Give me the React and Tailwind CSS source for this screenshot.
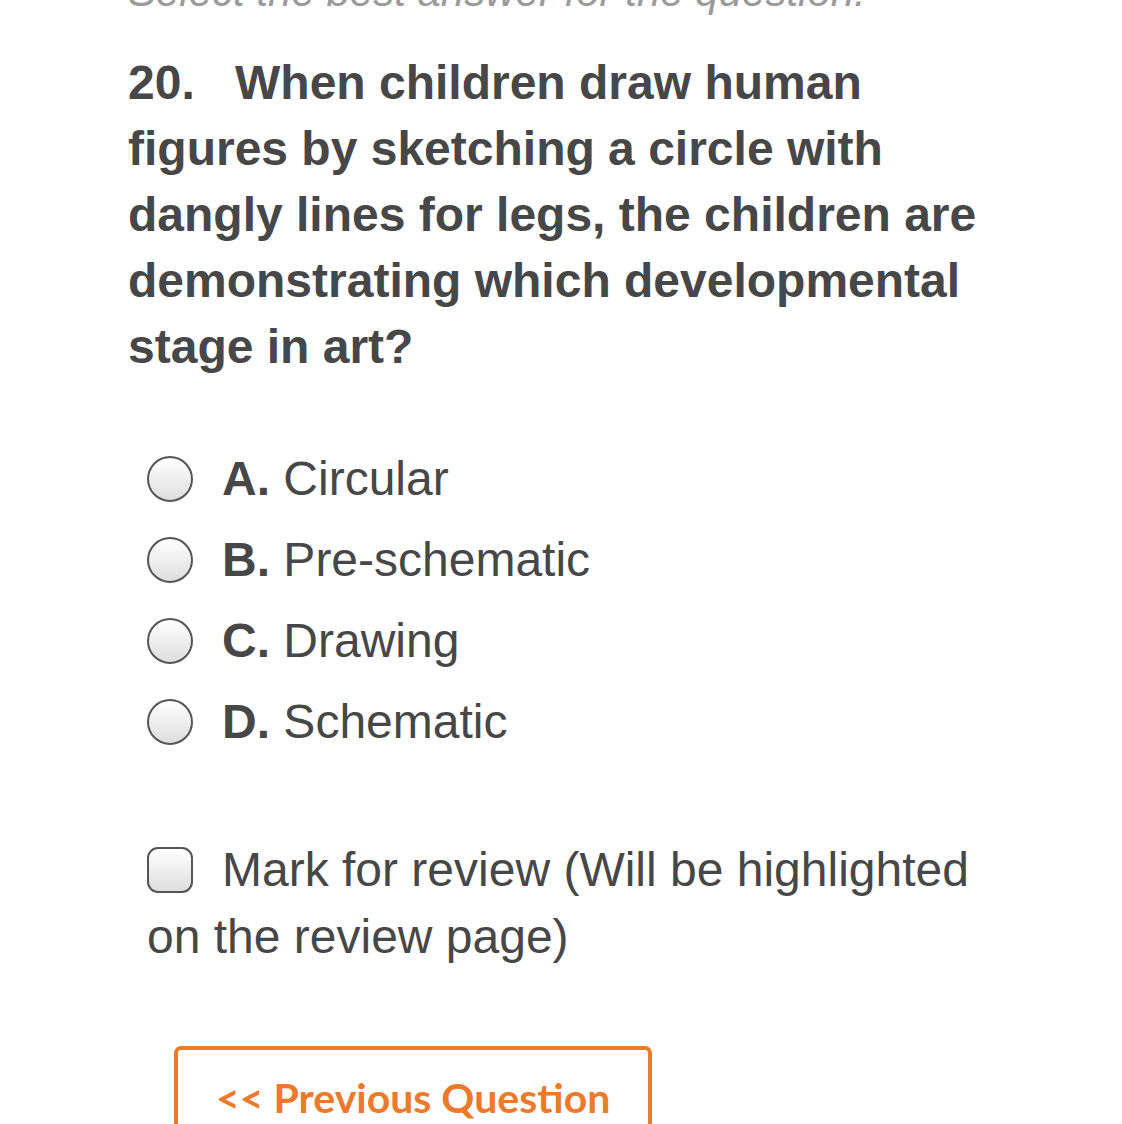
import React, { useState } from 'react';

const options = [
  { key: 'A', label: 'Circular' },
  { key: 'B', label: 'Pre-schematic' },
  { key: 'C', label: 'Drawing' },
  { key: 'D', label: 'Schematic' },
];

export default function App() {
  const [selected, setSelected] = useState(null);
  const [marked, setMarked] = useState(false);

  return (
    <div className="min-h-screen bg-white overflow-hidden font-['Liberation_Sans',Arial,sans-serif] text-[#474747]">
      <div className="pl-[128px] pr-[128px]">
        {/* Instructions (scrolled off the top) */}
        <p className="-mt-[41px] text-[42px] leading-[66px] italic text-[#9a9a9a] whitespace-nowrap">
          Select the best answer for the question.
        </p>

        {/* Question */}
        <h2 className="mt-[25px] text-[48px] leading-[66px] font-bold">
          <span className="inline-block w-[107px]">20.</span>
          When children draw human figures by sketching a circle with dangly lines for legs, the children are demonstrating which developmental stage in art?
        </h2>

        {/* Answers */}
        <div className="mt-[58px] pl-[19px]">
          {options.map((opt) => (
            <label
              key={opt.key}
              className="flex items-center h-[81px] cursor-pointer"
              onClick={() => setSelected(opt.key)}
            >
              <span className="w-[46px] h-[46px] rounded-full border-[2.5px] border-[#555] bg-gradient-to-b from-white to-[#dedede] shrink-0 flex items-center justify-center">
                {selected === opt.key && <span className="w-[20px] h-[20px] rounded-full bg-[#555]" />}
              </span>
              <span className="ml-[29px] text-[48px] leading-[66px] whitespace-nowrap">
                <span className="font-bold">{opt.key}.</span> {opt.label}
              </span>
            </label>
          ))}
        </div>

        {/* Mark for review */}
        <p
          className="mt-[74px] pl-[19px] text-[48px] leading-[67px] cursor-pointer"
          onClick={() => setMarked((m) => !m)}
        >
          <span className="inline-block align-[-7px] w-[46px] h-[46px] rounded-[11px] border-[2.5px] border-[#555] bg-gradient-to-b from-white to-[#dedede] mr-[29px] relative">
            {marked && <span className="absolute inset-[9px] rounded-[4px] bg-[#555]" />}
          </span>
          Mark for review (Will be highlighted on the review page)
        </p>

        {/* Navigation */}
        <div className="mt-[76px] pl-[46px]">
          <button className="border-[4px] border-[#ec7a2c] rounded-[7px] px-[38px] pt-[24px] pb-[20px] text-[41px] leading-[48px] font-bold font-['Lato','Liberation_Sans',sans-serif] text-[#ec7a2c] whitespace-nowrap">
            &lt;&lt; Previous Question
          </button>
        </div>
      </div>
    </div>
  );
}
